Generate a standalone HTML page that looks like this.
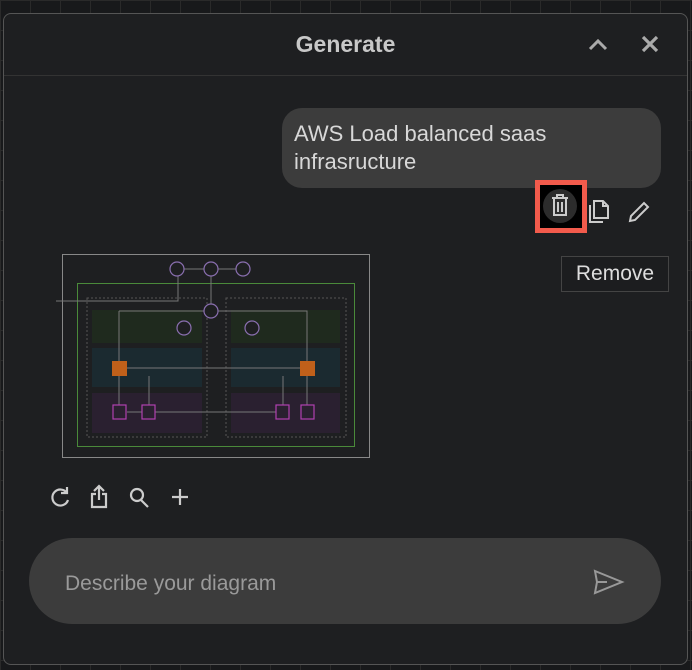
<!DOCTYPE html>
<html><head><style>
body{margin:0;width:692px;height:670px;background:#18191b;overflow:hidden;position:relative;font-family:"Liberation Sans",sans-serif;
background-image:linear-gradient(#2a2a2a 1px,transparent 1px),linear-gradient(90deg,#2a2a2a 1px,transparent 1px);background-size:30px 30px;}
.panel{position:absolute;left:3px;top:13px;width:683px;height:650px;background:#1e1f21;border:1.5px solid #555;border-radius:8px;}
.hd{position:absolute;left:0;top:0;width:100%;height:61px;border-bottom:1.5px solid #333;}
.title{position:absolute;left:0;width:100%;top:17px;text-align:center;font-weight:bold;font-size:23px;color:#c8c8c8;}
.bub{position:absolute;left:278px;top:94px;width:379px;height:80px;background:#3c3c3c;border-radius:20px;}
.bub div{position:absolute;left:12px;top:12px;font-size:22px;line-height:28px;color:#d8d8d8;}
.red{position:absolute;left:531px;top:166px;width:42px;height:43px;border:5px solid #f25b4c;background:#000;}
.tip{position:absolute;left:557px;top:242px;width:106px;height:34px;border:1px solid #444;background:#1c1d1f;color:#ddd;font-size:21px;line-height:34px;text-align:center;}
.inp{position:absolute;left:25px;top:524px;width:632px;height:86px;background:#3c3c3c;border-radius:43px;}
.inp span{position:absolute;left:36px;top:34px;font-size:21px;color:#9a9a9a;}
</style></head><body>
<div class="panel">
 <div class="hd"><div class="title">Generate</div>
  <svg style="position:absolute;left:582px;top:20px" width="80" height="22" viewBox="0 0 80 22"><path d="M4 15 L12 7 L20 15" stroke="#aaa" stroke-width="3" fill="none"/><path d="M57 3 L71 17 M71 3 L57 17" stroke="#aaa" stroke-width="3.2"/></svg>
 </div>
 <div class="bub"><div>AWS Load balanced saas<br>infrasructure</div></div>
 <div class="red"><div style="position:absolute;left:3px;top:4px;width:34px;height:34px;border-radius:17px;background:#2c2c2c"></div>
  <svg style="position:absolute;left:9px;top:8px" width="22" height="26" viewBox="0 0 22 26"><path d="M3 5 H19 M8 5 V2 H14 V5 M5 5 V22 H17 V5 M9 9 V19 M13 9 V19" stroke="#ccc" stroke-width="2" fill="none"/></svg></div>
 <svg style="position:absolute;left:582px;top:183px" width="30" height="28" viewBox="0 0 30 28"><path d="M8 4 H17 L22 9 V21 H8 Z M17 4 V9 H22" stroke="#ccc" stroke-width="2" fill="none"/><path d="M4 8 V25 H17" stroke="#ccc" stroke-width="2" fill="none"/></svg>
 <svg style="position:absolute;left:622px;top:185px" width="26" height="26" viewBox="0 0 26 26"><path d="M4 22 L5 17 L18 4 L22 8 L9 21 Z" stroke="#ccc" stroke-width="2" fill="none"/></svg>
 <div class="tip">Remove</div>
 <div class="inp"><span>Describe your diagram</span>
  <svg style="position:absolute;left:564px;top:31px" width="32" height="26" viewBox="0 0 32 26"><path d="M2 2 L29 13 L2 24 L4 13 Z M4 13 H14" stroke="#999" stroke-width="2" fill="none"/></svg></div>
</div>
<svg style="position:absolute;left:0;top:0" width="692" height="670" viewBox="0 0 692 670">
  <rect x="62.5" y="254.5" width="307" height="203" fill="none" stroke="#888"/>
  <rect x="77.5" y="283.5" width="277" height="163" fill="none" stroke="#4a8a3a"/>
  <rect x="87" y="298" width="120" height="139" fill="none" stroke="#555" stroke-dasharray="2 2"/>
  <rect x="226" y="298" width="120" height="139" fill="none" stroke="#555" stroke-dasharray="2 2"/>
  <rect x="92" y="310" width="110" height="33" fill="#1f2a1e"/><rect x="231" y="310" width="109" height="33" fill="#1f2a1e"/>
  <rect x="92" y="348" width="110" height="39" fill="#1b2a30"/><rect x="231" y="348" width="109" height="39" fill="#1b2a30"/>
  <rect x="92" y="393" width="110" height="40" fill="#2a2030"/><rect x="231" y="393" width="109" height="40" fill="#2a2030"/>
  <g stroke="#777" fill="none"><path d="M184 269 H236 M211 276 V304 M119 311 H307 V361 M119 311 V361 M127 368 H300 M119 376 V405 M149 376 V405 M283 376 V405 M307 376 V405 M56 301 H178 V276 M127 412 H276" /></g>
  <rect x="112" y="361" width="15" height="15" fill="#c0601a"/><rect x="300" y="361" width="15" height="15" fill="#c0601a"/>
  <g fill="#1e1f21" stroke="#8a6fb0" stroke-width="1.2"><circle cx="177" cy="269" r="7"/><circle cx="211" cy="269" r="7"/><circle cx="243" cy="269" r="7"/><circle cx="211" cy="311" r="7"/><circle cx="184" cy="328" r="7"/><circle cx="252" cy="328" r="7"/></g>
  <g fill="#2a2030" stroke="#b040b0" stroke-width="1.2"><rect x="113" y="405" width="13" height="14"/><rect x="142" y="405" width="13" height="14"/><rect x="276" y="405" width="13" height="14"/><rect x="301" y="405" width="13" height="14"/></g>
  <g stroke="#ccc" stroke-width="2.2" fill="none">
  <path d="M67 493 A8 8 0 1 0 68 500 M67 487 V493 H61"/>
  <path d="M99 486 V500 M94 491 L99 486 L104 491 M96 494 H92 V507 H106 V494 H102"/>
  <circle cx="137" cy="495" r="6"/><path d="M141 500 L148 507"/>
  <path d="M180 489 V505 M172 497 H188"/></g>
</svg>
</body></html>
